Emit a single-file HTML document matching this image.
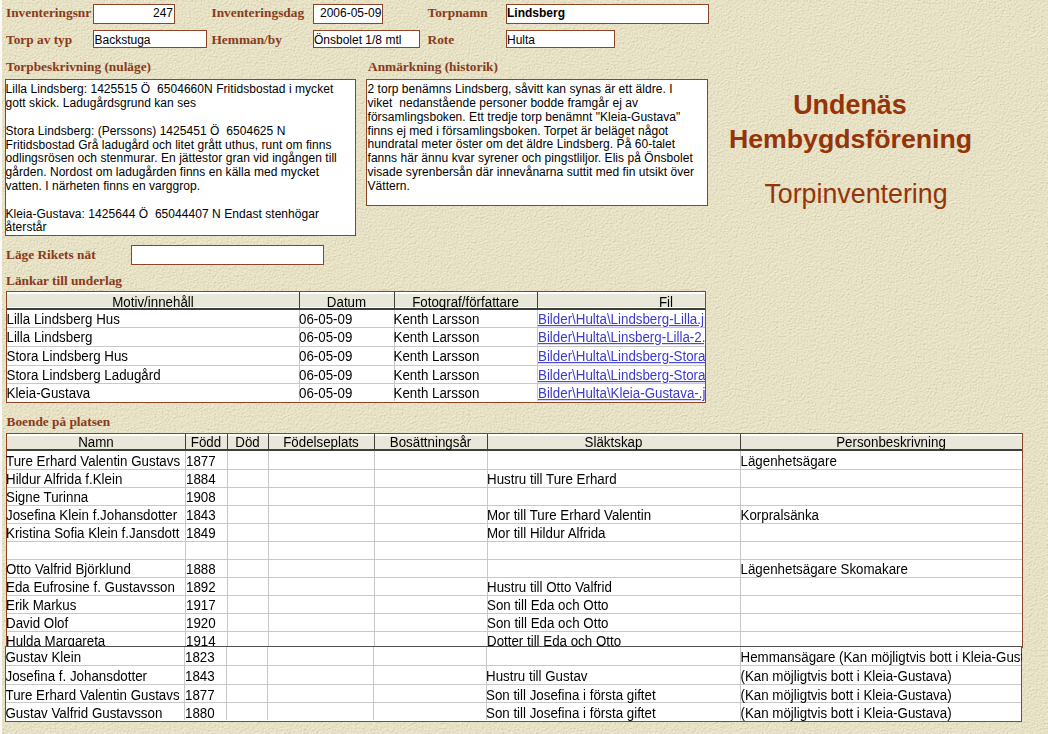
<!DOCTYPE html><html><head><meta charset="utf-8"><style>
html,body{margin:0;padding:0}
body{width:1048px;height:734px;overflow:hidden;position:relative;background:#e6e1c4;font-family:"Liberation Sans",sans-serif}
div{position:absolute;white-space:pre}
.lbl{font:bold 13.33px/15px "Liberation Serif",serif;color:#883a1b}
.box{background:#fff;border:1px solid #8c4626}
.bt{font:12px/14px "Liberation Sans",sans-serif;color:#000}
.dt{font:13.33px/17px "Liberation Sans",sans-serif;color:#000;transform:scaleY(1.1);transform-origin:0 13.1px}
.ht{font:13.33px/17px "Liberation Sans",sans-serif;color:#000;text-align:center;transform:scaleY(1.1);transform-origin:0 13.1px}
.lk{font:13.33px/17px "Liberation Sans",sans-serif;color:#3a3ad0;text-decoration:underline;transform:scaleY(1.1);transform-origin:0 13.1px}
.ln{background:#c8c8c8}
.dk{background:#3c403a}
.hb{background:#e9e7d9}
.clip{overflow:hidden}

</style></head><body>
<svg width="1048" height="734" style="position:absolute;left:0;top:0"><filter id="tx" x="0" y="0" width="100%" height="100%" color-interpolation-filters="sRGB"><feTurbulence type="fractalNoise" baseFrequency="0.85" numOctaves="2" seed="7" result="n"/><feDiffuseLighting in="n" surfaceScale="1.6" lighting-color="#ffffff" result="l"><feDistantLight azimuth="235" elevation="55"/></feDiffuseLighting><feColorMatrix in="l" type="matrix" values="0.26 0 0 0 0.6940 0.26 0 0 0 0.6744 0.26 0 0 0 0.5606 0 0 0 0 1"/></filter><rect width="1048" height="734" fill="#e6e1c4" filter="url(#tx)"/></svg>
<div style="left:0;top:0;width:2px;height:734px;background:#fbf9f7"></div>
<div class="lbl" style="left:6px;top:4.8px">Inventeringsnr</div>
<div class="lbl" style="left:211.5px;top:4.8px">Inventeringsdag</div>
<div class="lbl" style="left:427.5px;top:4.8px">Torpnamn</div>
<div class="lbl" style="left:6px;top:31.8px">Torp av typ</div>
<div class="lbl" style="left:211.5px;top:31.8px">Hemman/by</div>
<div class="lbl" style="left:427.5px;top:31.8px">Rote</div>
<div class="box" style="left:93px;top:4px;width:80px;height:18px"></div>
<div class="box" style="left:313px;top:4px;width:68px;height:18px"></div>
<div class="box" style="left:506px;top:4px;width:201px;height:18px"></div>
<div class="box" style="left:93px;top:30px;width:112px;height:16px"></div>
<div class="box" style="left:313px;top:30px;width:105px;height:16px"></div>
<div class="box" style="left:506px;top:30px;width:107px;height:16px"></div>
<div class="bt" style="left:93px;top:5.8px;width:80px;text-align:right">247</div>
<div class="bt" style="left:320px;top:5.8px;">2006-05-09</div>
<div class="bt" style="left:507px;top:6.0px;font-weight:bold">Lindsberg</div>
<div class="bt" style="left:94.5px;top:33.0px;">Backstuga</div>
<div class="bt" style="left:314px;top:33.0px;">Önsbolet 1/8 mtl</div>
<div class="bt" style="left:507px;top:33.0px;">Hulta</div>
<div class="lbl" style="left:6px;top:58.9px">Torpbeskrivning (nuläge)</div>
<div class="lbl" style="left:368px;top:58.9px">Anmärkning (historik)</div>
<div class="box" style="left:5px;top:79px;width:349px;height:155px"></div>
<div class="box" style="left:366px;top:79px;width:340px;height:125px"></div>
<div class="bt" style="left:5.5px;top:82.4px;letter-spacing:0.05px">Lilla Lindsberg: 1425515 Ö  6504660N Fritidsbostad i mycket</div>
<div class="bt" style="left:5.5px;top:96.2px;letter-spacing:0.05px">gott skick. Ladugårdsgrund kan ses</div>
<div class="bt" style="left:5.5px;top:123.8px;letter-spacing:0.05px">Stora Lindsberg: (Perssons) 1425451 Ö  6504625 N</div>
<div class="bt" style="left:5.5px;top:137.6px;letter-spacing:0.05px">Fritidsbostad Grå ladugård och litet grått uthus, runt om finns</div>
<div class="bt" style="left:5.5px;top:151.4px;letter-spacing:0.05px">odlingsrösen och stenmurar. En jättestor gran vid ingången till</div>
<div class="bt" style="left:5.5px;top:165.2px;letter-spacing:0.05px">gården. Nordost om ladugården finns en källa med mycket</div>
<div class="bt" style="left:5.5px;top:179.0px;letter-spacing:0.05px">vatten. I närheten finns en varggrop.</div>
<div class="bt" style="left:5.5px;top:206.6px;letter-spacing:0.05px">Kleia-Gustava: 1425644 Ö  65044407 N Endast stenhögar</div>
<div class="bt" style="left:5.5px;top:220.4px;letter-spacing:0.05px">återstår</div>
<div class="bt" style="left:367.5px;top:82.1px;letter-spacing:0.05px">2 torp benämns Lindsberg, såvitt kan synas är ett äldre. I</div>
<div class="bt" style="left:367.5px;top:95.9px;letter-spacing:0.05px">viket  nedanstående personer bodde framgår ej av</div>
<div class="bt" style="left:367.5px;top:109.7px;letter-spacing:0.05px">församlingsboken. Ett tredje torp benämnt "Kleia-Gustava"</div>
<div class="bt" style="left:367.5px;top:123.5px;letter-spacing:0.05px">finns ej med i församlingsboken. Torpet är beläget något</div>
<div class="bt" style="left:367.5px;top:137.3px;letter-spacing:0.05px">hundratal meter öster om det äldre Lindsberg. På 60-talet</div>
<div class="bt" style="left:367.5px;top:151.1px;letter-spacing:0.05px">fanns här ännu kvar syrener och pingstliljor. Elis på Önsbolet</div>
<div class="bt" style="left:367.5px;top:164.9px;letter-spacing:0.05px">visade syrenbersån där innevånarna suttit med fin utsikt över</div>
<div class="bt" style="left:367.5px;top:178.7px;letter-spacing:0.05px">Vättern.</div>
<div style="left:699px;top:89.6px;width:302px;text-align:center;font:bold 26.9px/30px 'Liberation Sans',sans-serif;color:#943408">Undenäs</div>
<div style="left:699.5px;top:124.3px;width:302px;text-align:center;font:bold 26.7px/30px 'Liberation Sans',sans-serif;color:#943408">Hembygdsförening</div>
<div style="left:705px;top:179.3px;width:302px;text-align:center;font:26.8px/30px 'Liberation Sans',sans-serif;color:#943408">Torpinventering</div>
<div class="lbl" style="left:6px;top:247.4px">Läge Rikets nät</div>
<div class="box" style="left:131px;top:245px;width:191px;height:18px"></div>
<div class="lbl" style="left:6px;top:273.2px">Länkar till underlag</div>
<div style="left:6px;top:291px;width:698px;height:110px;border:1px solid #8c4626;background:#fff"></div>
<div class="hb" style="left:7px;top:294px;width:698px;height:13px"></div>
<div class="dk" style="left:7px;top:308px;width:698px;height:2px"></div>
<div class="dk" style="left:299px;top:292px;width:1px;height:17px"></div>
<div class="ln" style="left:299px;top:310px;width:1px;height:91px"></div>
<div class="dk" style="left:394px;top:292px;width:1px;height:17px"></div>
<div class="ln" style="left:394px;top:310px;width:1px;height:91px"></div>
<div class="dk" style="left:537px;top:292px;width:1px;height:17px"></div>
<div class="ln" style="left:537px;top:310px;width:1px;height:91px"></div>
<div class="ln" style="left:7px;top:327px;width:698px;height:1px"></div>
<div class="ln" style="left:7px;top:346px;width:698px;height:1px"></div>
<div class="ln" style="left:7px;top:365px;width:698px;height:1px"></div>
<div class="ln" style="left:7px;top:383px;width:698px;height:1px"></div>
<div class="ht" style="left:7px;top:293.6px;width:292px">Motiv/innehåll</div>
<div class="ht" style="left:299px;top:293.6px;width:95px">Datum</div>
<div class="ht" style="left:394px;top:293.6px;width:143px">Fotograf/författare</div>
<div class="ht" style="left:616px;top:293.6px;width:100px">Fil</div>
<div class="dt" style="left:6.5px;top:311.4px;">Lilla Lindsberg Hus</div>
<div class="dt" style="left:299px;top:311.4px;">06-05-09</div>
<div class="dt" style="left:393.5px;top:311.4px;">Kenth Larsson</div>
<div class="clip" style="left:537px;top:310px;width:168px;height:17px"><div class="lk" style="left:1px;top:1.4px">Bilder\Hulta\Lindsberg-Lilla.jpg</div></div>
<div class="dt" style="left:6.5px;top:329.4px;">Lilla Lindsberg</div>
<div class="dt" style="left:299px;top:329.4px;">06-05-09</div>
<div class="dt" style="left:393.5px;top:329.4px;">Kenth Larsson</div>
<div class="clip" style="left:537px;top:328px;width:168px;height:17px"><div class="lk" style="left:1px;top:1.4px">Bilder\Hulta\Linsberg-Lilla-2.jpg</div></div>
<div class="dt" style="left:6.5px;top:348.4px;">Stora Lindsberg Hus</div>
<div class="dt" style="left:299px;top:348.4px;">06-05-09</div>
<div class="dt" style="left:393.5px;top:348.4px;">Kenth Larsson</div>
<div class="clip" style="left:537px;top:347px;width:168px;height:17px"><div class="lk" style="left:1px;top:1.4px">Bilder\Hulta\Lindsberg-Stora.jpg</div></div>
<div class="dt" style="left:6.5px;top:367.4px;">Stora Lindsberg Ladugård</div>
<div class="dt" style="left:299px;top:367.4px;">06-05-09</div>
<div class="dt" style="left:393.5px;top:367.4px;">Kenth Larsson</div>
<div class="clip" style="left:537px;top:366px;width:168px;height:17px"><div class="lk" style="left:1px;top:1.4px">Bilder\Hulta\Lindsberg-Stora2.jpg</div></div>
<div class="dt" style="left:6.5px;top:385.4px;">Kleia-Gustava</div>
<div class="dt" style="left:299px;top:385.4px;">06-05-09</div>
<div class="dt" style="left:393.5px;top:385.4px;">Kenth Larsson</div>
<div class="clip" style="left:537px;top:384px;width:168px;height:17px"><div class="lk" style="left:1px;top:1.4px">Bilder\Hulta\Kleia-Gustava-.jpg</div></div>
<div class="lbl" style="left:6.5px;top:414.2px">Boende på platsen</div>
<div style="left:6px;top:433px;width:1015px;height:214px;border:1px solid #8c4626;border-bottom:none;background:#fff"></div>
<div class="hb" style="left:7px;top:436px;width:1015px;height:13px"></div>
<div class="dk" style="left:7px;top:449px;width:1015px;height:2px"></div>
<div class="dk" style="left:185px;top:434px;width:1px;height:16px"></div>
<div class="ln" style="left:185px;top:451px;width:1px;height:196px"></div>
<div class="dk" style="left:227px;top:434px;width:1px;height:16px"></div>
<div class="ln" style="left:227px;top:451px;width:1px;height:196px"></div>
<div class="dk" style="left:268px;top:434px;width:1px;height:16px"></div>
<div class="ln" style="left:268px;top:451px;width:1px;height:196px"></div>
<div class="dk" style="left:374px;top:434px;width:1px;height:16px"></div>
<div class="ln" style="left:374px;top:451px;width:1px;height:196px"></div>
<div class="dk" style="left:487px;top:434px;width:1px;height:16px"></div>
<div class="ln" style="left:487px;top:451px;width:1px;height:196px"></div>
<div class="dk" style="left:740px;top:434px;width:1px;height:16px"></div>
<div class="ln" style="left:740px;top:451px;width:1px;height:196px"></div>
<div class="ln" style="left:7px;top:469px;width:1015px;height:1px"></div>
<div class="ln" style="left:7px;top:487px;width:1015px;height:1px"></div>
<div class="ln" style="left:7px;top:505px;width:1015px;height:1px"></div>
<div class="ln" style="left:7px;top:523px;width:1015px;height:1px"></div>
<div class="ln" style="left:7px;top:541px;width:1015px;height:1px"></div>
<div class="ln" style="left:7px;top:559px;width:1015px;height:1px"></div>
<div class="ln" style="left:7px;top:577px;width:1015px;height:1px"></div>
<div class="ln" style="left:7px;top:595px;width:1015px;height:1px"></div>
<div class="ln" style="left:7px;top:613px;width:1015px;height:1px"></div>
<div class="ln" style="left:7px;top:631px;width:1015px;height:1px"></div>
<div class="ht" style="left:7px;top:434.3px;width:178px">Namn</div>
<div class="ht" style="left:185px;top:434.3px;width:42px">Född</div>
<div class="ht" style="left:227px;top:434.3px;width:41px">Död</div>
<div class="ht" style="left:268px;top:434.3px;width:106px">Födelseplats</div>
<div class="ht" style="left:374px;top:434.3px;width:113px">Bosättningsår</div>
<div class="ht" style="left:487px;top:434.3px;width:253px">Släktskap</div>
<div class="ht" style="left:750px;top:434.3px;width:282px">Personbeskrivning</div>
<div class="clip" style="left:0;top:451px;width:1048px;height:196px">
<div class="dt" style="left:6px;top:1.7px;width:178px;overflow:hidden">Ture Erhard Valentin Gustavs</div>
<div class="dt" style="left:186px;top:1.7px;width:40px;overflow:hidden">1877</div>
<div class="dt" style="left:740.5px;top:1.7px;width:281px;overflow:hidden">Lägenhetsägare</div>
<div class="dt" style="left:6px;top:19.7px;width:178px;overflow:hidden">Hildur Alfrida f.Klein</div>
<div class="dt" style="left:186px;top:19.7px;width:40px;overflow:hidden">1884</div>
<div class="dt" style="left:487px;top:19.7px;width:252px;overflow:hidden">Hustru till Ture Erhard</div>
<div class="dt" style="left:6px;top:37.7px;width:178px;overflow:hidden">Signe Turinna</div>
<div class="dt" style="left:186px;top:37.7px;width:40px;overflow:hidden">1908</div>
<div class="dt" style="left:6px;top:55.7px;width:178px;overflow:hidden">Josefina Klein f.Johansdotter</div>
<div class="dt" style="left:186px;top:55.7px;width:40px;overflow:hidden">1843</div>
<div class="dt" style="left:487px;top:55.7px;width:252px;overflow:hidden">Mor till Ture Erhard Valentin</div>
<div class="dt" style="left:740.5px;top:55.7px;width:281px;overflow:hidden">Korpralsänka</div>
<div class="dt" style="left:6px;top:73.7px;width:178px;overflow:hidden">Kristina Sofia Klein f.Jansdott</div>
<div class="dt" style="left:186px;top:73.7px;width:40px;overflow:hidden">1849</div>
<div class="dt" style="left:487px;top:73.7px;width:252px;overflow:hidden">Mor till Hildur Alfrida</div>
<div class="dt" style="left:6px;top:109.7px;width:178px;overflow:hidden">Otto Valfrid Björklund</div>
<div class="dt" style="left:186px;top:109.7px;width:40px;overflow:hidden">1888</div>
<div class="dt" style="left:740.5px;top:109.7px;width:281px;overflow:hidden">Lägenhetsägare Skomakare</div>
<div class="dt" style="left:6px;top:127.7px;width:178px;overflow:hidden">Eda Eufrosine f. Gustavsson</div>
<div class="dt" style="left:186px;top:127.7px;width:40px;overflow:hidden">1892</div>
<div class="dt" style="left:487px;top:127.7px;width:252px;overflow:hidden">Hustru till Otto Valfrid</div>
<div class="dt" style="left:6px;top:145.7px;width:178px;overflow:hidden">Erik Markus</div>
<div class="dt" style="left:186px;top:145.7px;width:40px;overflow:hidden">1917</div>
<div class="dt" style="left:487px;top:145.7px;width:252px;overflow:hidden">Son till Eda och Otto</div>
<div class="dt" style="left:6px;top:163.7px;width:178px;overflow:hidden">David Olof</div>
<div class="dt" style="left:186px;top:163.7px;width:40px;overflow:hidden">1920</div>
<div class="dt" style="left:487px;top:163.7px;width:252px;overflow:hidden">Son till Eda och Otto</div>
<div class="dt" style="left:6px;top:181.7px;width:178px;overflow:hidden">Hulda Margareta</div>
<div class="dt" style="left:186px;top:181.7px;width:40px;overflow:hidden">1914</div>
<div class="dt" style="left:487px;top:181.7px;width:252px;overflow:hidden">Dotter till Eda och Otto</div>
</div>
<div style="left:5px;top:646px;width:1015px;height:75px;border:1px solid #8c4626;border-top:none;background:#fff"></div>
<div style="left:6px;top:646px;width:1015px;height:1px;background:#505050"></div>
<div class="ln" style="left:184px;top:647px;width:1px;height:73px"></div>
<div class="ln" style="left:226px;top:647px;width:1px;height:73px"></div>
<div class="ln" style="left:267px;top:647px;width:1px;height:73px"></div>
<div class="ln" style="left:373px;top:647px;width:1px;height:73px"></div>
<div class="ln" style="left:486px;top:647px;width:1px;height:73px"></div>
<div class="ln" style="left:740px;top:647px;width:1px;height:73px"></div>
<div class="ln" style="left:6px;top:665px;width:1015px;height:1px"></div>
<div class="ln" style="left:6px;top:684px;width:1015px;height:1px"></div>
<div class="ln" style="left:6px;top:702px;width:1015px;height:1px"></div>
<div class="dt" style="left:5.5px;top:648.7px;width:178px;overflow:hidden">Gustav Klein</div>
<div class="dt" style="left:185px;top:648.7px;width:40px;overflow:hidden">1823</div>
<div class="dt" style="left:740.5px;top:648.7px;width:281px;overflow:hidden">Hemmansägare (Kan möjligtvis bott i Kleia-Gustava)</div>
<div class="dt" style="left:5.5px;top:667.7px;width:178px;overflow:hidden">Josefina f. Johansdotter</div>
<div class="dt" style="left:185px;top:667.7px;width:40px;overflow:hidden">1843</div>
<div class="dt" style="left:486px;top:667.7px;width:253px;overflow:hidden">Hustru till Gustav</div>
<div class="dt" style="left:740.5px;top:667.7px;width:281px;overflow:hidden">(Kan möjligtvis bott i Kleia-Gustava)</div>
<div class="dt" style="left:5.5px;top:686.7px;width:178px;overflow:hidden">Ture Erhard Valentin Gustavs</div>
<div class="dt" style="left:185px;top:686.7px;width:40px;overflow:hidden">1877</div>
<div class="dt" style="left:486px;top:686.7px;width:253px;overflow:hidden">Son till Josefina i första giftet</div>
<div class="dt" style="left:740.5px;top:686.7px;width:281px;overflow:hidden">(Kan möjligtvis bott i Kleia-Gustava)</div>
<div class="dt" style="left:5.5px;top:704.7px;width:178px;overflow:hidden">Gustav Valfrid Gustavsson</div>
<div class="dt" style="left:185px;top:704.7px;width:40px;overflow:hidden">1880</div>
<div class="dt" style="left:486px;top:704.7px;width:253px;overflow:hidden">Son till Josefina i första giftet</div>
<div class="dt" style="left:740.5px;top:704.7px;width:281px;overflow:hidden">(Kan möjligtvis bott i Kleia-Gustava)</div>
</body></html>
